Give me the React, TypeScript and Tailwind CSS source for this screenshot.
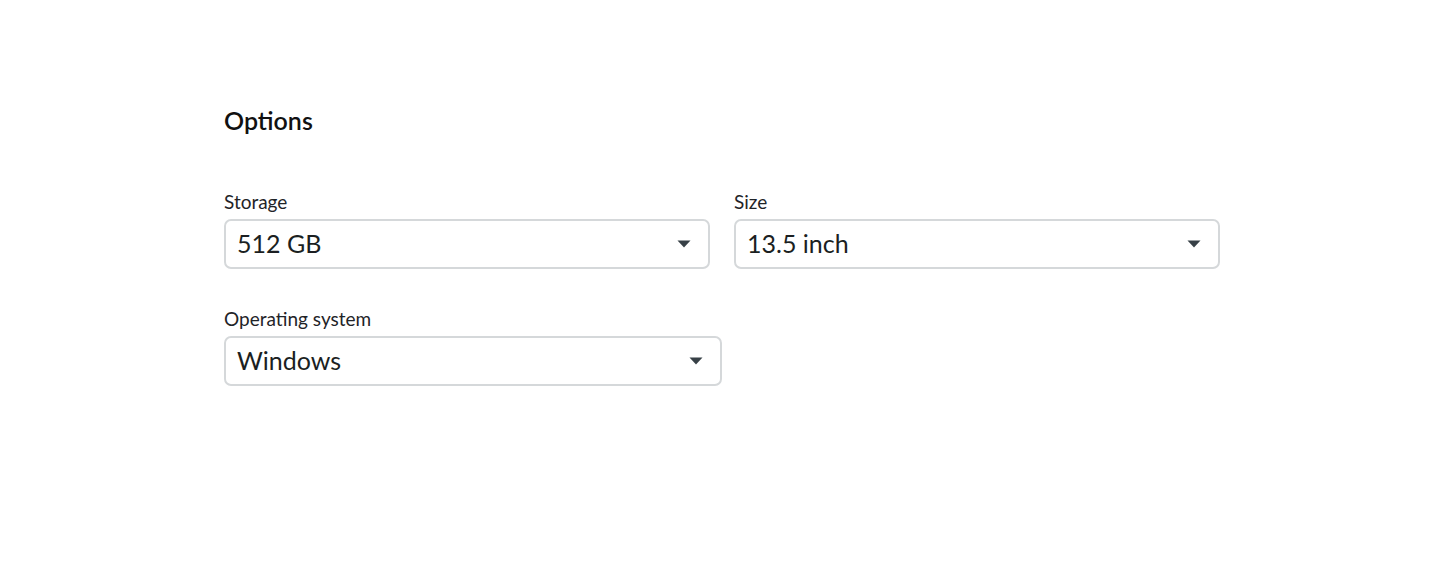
import React from 'react';

const font = { fontFamily: 'Lato, "Noto Sans", sans-serif' };

function Caret() {
  return (
    <svg width="14" height="8" viewBox="0 0 14 8" className="shrink-0">
      <path d="M0.5 0.5 H13.5 L7 7.5 Z" fill="#374046" />
    </svg>
  );
}

function SelectField({ label, value, width }: { label: string; value: string; width: string }) {
  return (
    <div className={`flex flex-col ${width}`}>
      <label className="text-[19px] leading-[24px] text-[#1f2428] mb-[5px]">{label}</label>
      <div className="h-[50px] flex items-center justify-between rounded-[7px] border-2 border-[#d5d8da] bg-white pl-[11px] pr-[17px]">
        <span className="text-[25px] text-[#1b1f22]">{value}</span>
        <Caret />
      </div>
    </div>
  );
}

export default function App() {
  return (
    <div className="min-h-screen bg-white pl-[224px] pt-[104px]" style={font}>
      <h2 className="text-[25px] leading-[32px] font-semibold text-[#111]">Options</h2>
      <div className="mt-[54px] flex gap-[24px]">
        <SelectField label="Storage" value="512 GB" width="w-[486px]" />
        <SelectField label="Size" value="13.5 inch" width="w-[486px]" />
      </div>
      <div className="mt-[38px]">
        <SelectField label="Operating system" value="Windows" width="w-[498px]" />
      </div>
    </div>
  );
}
